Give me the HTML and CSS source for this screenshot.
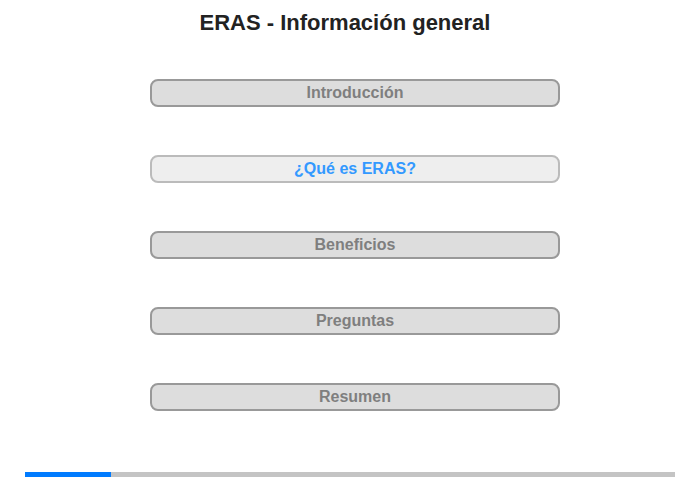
FILE: index.html
```html
<!DOCTYPE html>
<html lang="es">
<head>
<meta charset="UTF-8">
<meta name="viewport" content="width=device-width, initial-scale=1.0">
<title>ERAS - Información general</title>
<link rel="stylesheet" href="styles.css">
</head>
<body>

<h1 class="title">ERAS - Información general</h1>

<div class="menu">
  <button class="btn">Introducción</button>
  <button class="btn active">¿Qué es ERAS?</button>
  <button class="btn">Beneficios</button>
  <button class="btn">Preguntas</button>
  <button class="btn">Resumen</button>
</div>

<div class="progress">
  <div class="progress-fill" style="width:13.2%"></div>
</div>

</body>
</html>
```

FILE: styles.css
```css
body {
  font-family: "Liberation Sans", Arial, sans-serif;
  margin: 0;
  background: #fff;
  color: #222;
}
.title {
  font-size: 22px;
  line-height: 25px;
  font-weight: bold;
  text-align: center;
  margin: 10px 0 0;
  padding-right: 10px;
}
.menu {
  display: flex;
  flex-direction: column;
  gap: 48px;
  width: 410px;
  margin: 44px 0 0 150px;
}
.btn {
  height: 28px;
  padding: 0;
  font-family: inherit;
  font-size: 16px;
  font-weight: bold;
  color: #7f7f7f;
  background: #dddddd;
  border: 2px solid #999;
  border-radius: 8px;
  cursor: pointer;
}
.btn.active {
  color: #3399ff;
  background: #eeeeee;
  border-color: #bbb;
}
.progress {
  height: 5px;
  margin: 61px 25px 0;
  background: #c4c4c4;
}
.progress-fill {
  height: 100%;
  background: #007bff;
}
```
